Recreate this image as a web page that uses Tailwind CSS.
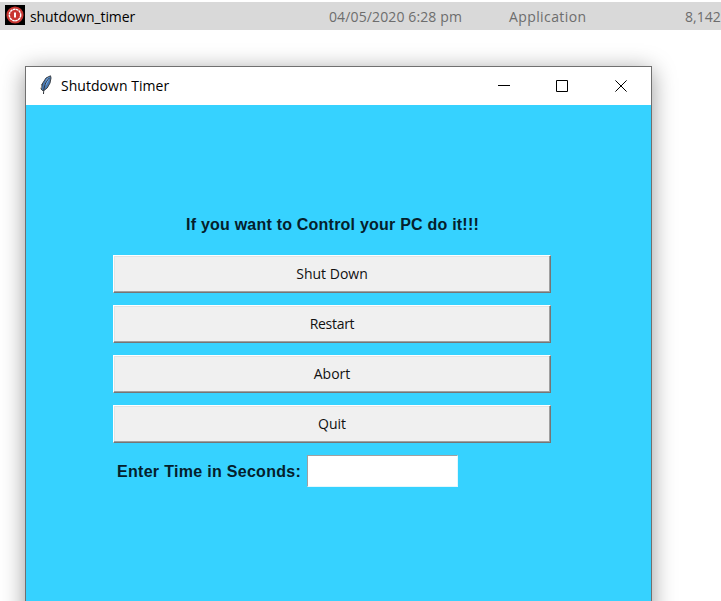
<!DOCTYPE html>
<html lang="en">
<head>
<meta charset="utf-8">
<title>Shutdown Timer</title>
<script src="https://cdn.jsdelivr.net/npm/@tailwindcss/browser@4"></script>
</head>
<body class="h-[601px] w-[721px] overflow-hidden bg-white pt-[2px] font-['Open_Sans','Noto_Sans',sans-serif] text-[14px] text-black">
<div class="flex h-7 items-center bg-[#d9d9d9] pl-[5px] whitespace-nowrap">
  <svg class="h-5 w-5 shrink-0 -translate-y-px" viewBox="0 0 20 20"><rect width="20" height="20" fill="#000"/><circle cx="10" cy="10" r="8.6" fill="#c93631"/><circle cx="10" cy="10" r="5.7" fill="#c93631" stroke="#fff" stroke-width="1.4" stroke-dasharray="2.5 .5"/><path d="M10 7.5v5" stroke="#fff" stroke-width="2"/></svg>
  <div class="ml-[5px] w-[299px] tracking-[-0.1px]">shutdown_timer</div>
  <div class="w-[180px] tracking-[0.12px] text-[#6d6d6d]">04/05/2020 6:28 pm</div>
  <div class="w-[176px] tracking-[0.4px] text-[#6d6d6d]">Application</div>
  <div class="text-[#6d6d6d]">8,142</div>
</div>
<main class="mt-9 ml-[25px] h-[560px] w-[627px] border border-[#707070] bg-[#36d2ff] shadow-[0_4px_22px_rgba(0,0,0,0.4)]">
  <header class="flex h-[38px] items-center bg-white pb-[2px]">
    <svg class="ml-[13px] h-5 w-[13px]" viewBox="0 0 13 20"><path d="M11.5 .8 7 3 3.2 9 2 14l2.2 2 4-3 2.8-5 1-5z" fill="#4779b4" stroke="#3d4248"/><path d="M10.3 2 7.5 4 5 11.5 7.5 9.5 9.8 5z" fill="#78aeea"/><path d="M10.3 3C6.3 7 4.7 12 4.5 19M3 9l-.5 5" fill="none" stroke="#30343a"/><path d="M2.5 9.5v4" stroke="#999" stroke-width=".8"/></svg>
    <h1 class="ml-[9px] flex-1 tracking-[0.04px]">Shutdown Timer</h1>
    <svg class="mr-[23px] h-[13px] w-[131px]" viewBox="0 0 131 13" fill="none" stroke="#000"><path d="M1 6.5h12"/><path d="M59.5 1.5h11v11h-11z"/><path d="m118.4 1.4 11.2 11.2M129.6 1.4l-11.2 11.2"/></svg>
  </header>
  <section class="flex flex-col pt-[109px] pl-[87px]">
    <p class="ml-[73px] h-[41px] font-['Liberation_Sans',sans-serif] text-[16px] leading-[22px] font-bold tracking-[0.22px] whitespace-nowrap text-[#05202b]">If you want to Control your PC do it!!!</p>
    <div class="flex w-[438px] flex-col gap-3 text-[14px] text-[#111]">
      <button class="h-[38px] border border-t-white border-r-[#757575] border-b-[#757575] border-l-white bg-[#f0f0f0] pb-[2px] shadow-[inset_-1px_-1px_#a0a0a0,inset_1px_1px_#e3e3e3]">Shut Down</button>
      <button class="h-[38px] border border-t-white border-r-[#757575] border-b-[#757575] border-l-white bg-[#f0f0f0] pb-[2px] shadow-[inset_-1px_-1px_#a0a0a0,inset_1px_1px_#e3e3e3] tracking-[-0.3px]">Restart</button>
      <button class="h-[38px] border border-t-white border-r-[#757575] border-b-[#757575] border-l-white bg-[#f0f0f0] pb-[2px] shadow-[inset_-1px_-1px_#a0a0a0,inset_1px_1px_#e3e3e3]">Abort</button>
      <button class="h-[38px] border border-t-white border-r-[#757575] border-b-[#757575] border-l-white bg-[#f0f0f0] pb-[2px] shadow-[inset_-1px_-1px_#a0a0a0,inset_1px_1px_#e3e3e3]">Quit</button>
    </div>
    <div class="mt-3 flex pl-1">
      <label for="seconds" class="w-[190px] pt-[5px] font-['Liberation_Sans',sans-serif] text-[16px] leading-6 font-bold tracking-[0.3px] whitespace-nowrap text-[#05202b]">Enter Time in Seconds:</label>
      <input id="seconds" class="h-8 w-[151px] border border-t-[#a0a0a0] border-r-[#e3f7fd] border-b-[#e3f7fd] border-l-[#a0a0a0] bg-white">
    </div>
  </section>
</main>
</body>
</html>
